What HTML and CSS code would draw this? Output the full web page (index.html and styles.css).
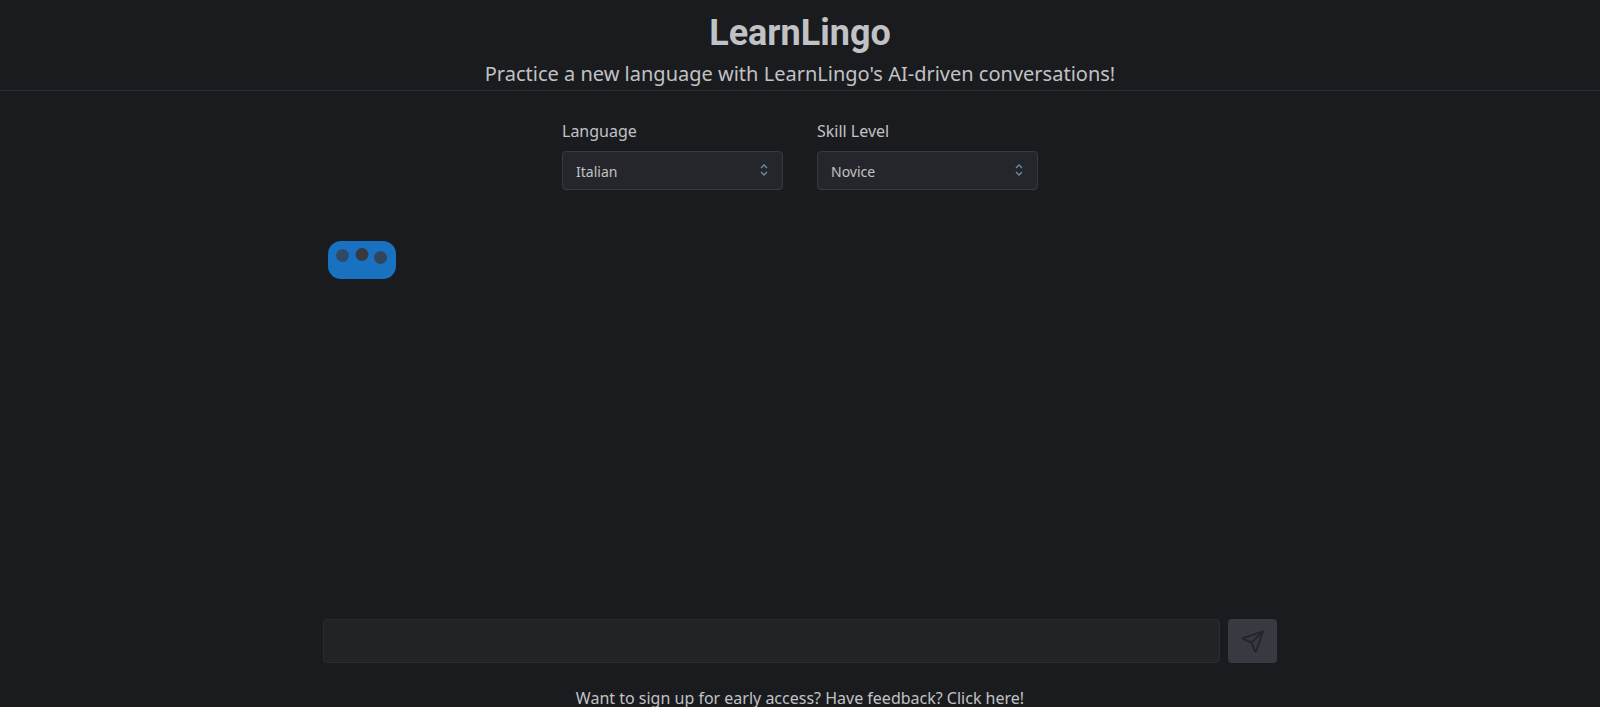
FILE: index.html
```html
<!DOCTYPE html>
<html lang="en">
<head>
<meta charset="UTF-8">
<meta name="viewport" content="width=device-width, initial-scale=1.0">
<title>LearnLingo</title>
<link rel="stylesheet" href="styles.css">
</head>
<body>

<header class="header">
    <h1>LearnLingo</h1>
    <p>Practice a new language with LearnLingo's AI-driven conversations!</p>
</header>

<main class="main">
    <div class="settings">
        <div class="field">
            <label for="language">Language</label>
            <div class="select-wrap">
                <select id="language">
                    <option selected>Italian</option>
                    <option>French</option>
                    <option>Spanish</option>
                </select>
                <svg class="chevrons" viewBox="0 0 8 12" aria-hidden="true"><path d="M1 4 4 1l3 3M1 8l3 3 3-3"/></svg>
            </div>
        </div>
        <div class="field">
            <label for="level">Skill Level</label>
            <div class="select-wrap">
                <select id="level">
                    <option selected>Novice</option>
                    <option>Intermediate</option>
                    <option>Advanced</option>
                </select>
                <svg class="chevrons" viewBox="0 0 8 12" aria-hidden="true"><path d="M1 4 4 1l3 3M1 8l3 3 3-3"/></svg>
            </div>
        </div>
    </div>

    <!-- Conversation, with the typing indicator -->
    <div class="messages">
        <div class="bubble">
            <svg viewBox="0 0 68 38" aria-hidden="true">
                <circle cx="14.5" cy="14.5" r="6.5" fill="#2f4a66"/>
                <circle cx="34" cy="13.5" r="6.5" fill="#373a40"/>
                <circle cx="52.5" cy="16.5" r="6.5" fill="#33455a"/>
            </svg>
        </div>
    </div>

    <form class="message-form">
        <input type="text" id="message" aria-label="Message">
        <button type="submit" aria-label="Send" disabled>
            <svg viewBox="0 0 24 24" aria-hidden="true"><path d="M10.5 13.5 22 2.5M22 2.5 15 22.3c-.2.5-.8.5-1 0l-3.500-8.800-8.300-3.500c-.5-.3-.5-.8 0-1z"/></svg>
        </button>
    </form>
</main>

<footer class="footer">
    <a href="#">Want to sign up for early access? Have feedback? Click here!</a>
</footer>

</body>
</html>
```
FILE: styles.css
```css
* {
    box-sizing: border-box;
}
body {
    display: flex;
    flex-direction: column;
    height: 100vh;
    margin: 0;
    overflow: hidden;
    background-color: #1a1b1e;
    color: #c1c2c5;
    font-family: "Noto Sans", sans-serif;
    font-size: 16px;
    line-height: 24px;
}
.header {
    padding-top: 9px;
    border-bottom: 1px solid #2c2e33;
    text-align: center;
}
.header h1 {
    margin: 0;
    font-family: Roboto, sans-serif;
    font-size: 36px;
    font-weight: 700;
    line-height: 48px;
}
.header p {
    margin: 0;
    font-size: 20px;
    line-height: 33px;
}
.main {
    display: flex;
    flex: 1;
    flex-direction: column;
    width: 100%;
    max-width: 954px;
    margin: 0 auto;
}
.settings {
    display: flex;
    justify-content: center;
    gap: 34px;
    padding-top: 28px;
}
.field {
    width: 221px;
}
.field label {
    display: block;
    margin-bottom: 8px;
}
.select-wrap {
    position: relative;
}
.field select {
    display: block;
    width: 100%;
    height: 39px;
    padding: 1px 13px 0;
    appearance: none;
    background-color: #25262b;
    border: 1px solid #373a40;
    border-radius: 4px;
    color: #c1c2c5;
    font-family: inherit;
    font-size: 14px;
}
.chevrons {
    position: absolute;
    top: 13px;
    right: 15px;
    width: 8px;
    height: 12px;
    fill: none;
    stroke: #6c8caa;
    stroke-width: 1.3;
    pointer-events: none;
}
.messages {
    flex: 1;
    padding: 51px 5px 0;
}
.bubble {
    width: 68px;
    height: 38px;
    background-color: #1971c2;
    border-radius: 13px;
}
.bubble svg {
    display: block;
}
.message-form {
    display: flex;
    gap: 8px;
}
.message-form input {
    flex: 1;
    height: 44px;
    padding: 0 13px;
    background-color: #222327;
    border: 1px solid #2a2c30;
    border-radius: 4px;
    color: #c1c2c5;
    font: inherit;
}
.message-form button {
    display: flex;
    align-items: center;
    justify-content: center;
    width: 49px;
    height: 44px;
    padding: 0;
    background-color: #373a40;
    border: 0;
    border-radius: 4px;
}
.message-form svg {
    width: 24px;
    height: 24px;
    fill: none;
    stroke: #25262b;
    stroke-width: 2;
    stroke-linecap: round;
    stroke-linejoin: round;
}
.footer {
    height: 44px;
    padding-top: 23px;
    text-align: center;
}
.footer a {
    color: inherit;
    text-decoration: none;
}
```
